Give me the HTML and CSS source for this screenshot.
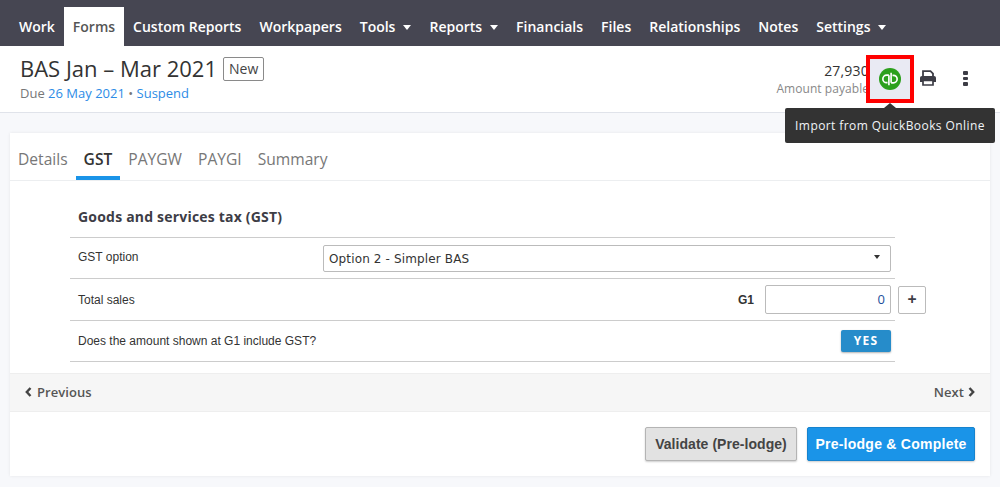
FILE: index.html
```html
<!DOCTYPE html>
<html lang="en">
<head>
<meta charset="utf-8">
<title>BAS Jan – Mar 2021</title>
<link rel="stylesheet" href="styles.css">
</head>
<body>
<nav class="nav">
  <a class="nav-item">Work</a>
  <a class="nav-item active">Forms</a>
  <a class="nav-item">Custom Reports</a>
  <a class="nav-item">Workpapers</a>
  <a class="nav-item">Tools<i class="caret"></i></a>
  <a class="nav-item">Reports<i class="caret"></i></a>
  <a class="nav-item">Financials</a>
  <a class="nav-item">Files</a>
  <a class="nav-item">Relationships</a>
  <a class="nav-item">Notes</a>
  <a class="nav-item">Settings<i class="caret"></i></a>
</nav>
<header class="head">
  <div class="head-left">
    <div class="title-row"><h1 class="title">BAS Jan – Mar 2021</h1><span class="badge">New</span></div>
    <div class="due">Due <a class="link">26 May 2021</a> • <a class="link">Suspend</a></div>
  </div>
  <div class="head-right">
    <div class="amount">
      <div class="amount-value">27,930</div>
      <div class="amount-label">Amount payable</div>
    </div>
    <div class="qb-wrap">
      <div class="qb-box">
        <svg class="qb-icon" width="22" height="22" viewBox="0 0 24 24">
          <circle cx="12" cy="12" r="12" fill="#2ca01c"/>
          <path d="M10.800 7.800v11M13.200 5.200v11" stroke="#fff" stroke-width="1.800" fill="none"/>
          <path d="M10.800 7.800H8.300a4.100 4.100 0 0 0 0 8.200h1M13.200 16.200h2.500a4.100 4.100 0 0 0 0-8.200h-1" stroke="#fff" stroke-width="1.800" fill="none"/>
        </svg>
      </div>
      <div class="tooltip">Import from QuickBooks Online</div>
    </div>
    <svg class="print-icon" width="18" height="16" viewBox="0 0 18 16">
      <path d="M4 6V1.200h7.500L14 3.600V6" fill="#fff" stroke="#3d3d46" stroke-width="1.800"/>
      <path d="M1 8.200C1 6.900 1.800 6 3 6h12c1.200 0 2 .9 2 2.200V12h-3v-1.500H4V12H1z" fill="#3d3d46"/>
      <path d="M4 10.500h10V15H4z" fill="#fff" stroke="#3d3d46" stroke-width="1.700"/>
    </svg>
    <div class="dots"><i></i><i></i><i></i></div>
  </div>
</header>
<main class="card">
  <div class="tabs">
    <a class="tab">Details</a>
    <a class="tab current">GST</a>
    <a class="tab">PAYGW</a>
    <a class="tab">PAYGI</a>
    <a class="tab">Summary</a>
  </div>
  <section class="form">
    <h2 class="form-title">Goods and services tax (GST)</h2>
    <div class="row row-select">
      <span class="label label-select">GST option</span>
      <div class="select">Option 2 - Simpler BAS<i class="select-caret"></i></div>
    </div>
    <div class="row row-sales">
      <span class="label">Total sales</span>
      <span class="code">G1</span>
      <div class="input">0</div>
      <div class="plus">+</div>
    </div>
    <div class="row row-yes">
      <span class="label">Does the amount shown at G1 include GST?</span>
      <div class="yes">YES</div>
    </div>
  </section>
  <div class="pager">
    <a class="pager-link pager-prev"><svg class="chev" width="7" height="10" viewBox="0 0 7 10"><path d="M5.500 1 1.800 5l3.700 4" fill="none" stroke="#444" stroke-width="2.400"/></svg>Previous</a>
    <a class="pager-link">Next<svg class="chev" width="7" height="10" viewBox="0 0 7 10"><path d="M1.500 1l3.700 4-3.700 4" fill="none" stroke="#444" stroke-width="2.400"/></svg></a>
  </div>
  <div class="actions">
    <button class="btn btn-grey">Validate (Pre-lodge)</button>
    <button class="btn btn-blue">Pre-lodge &amp; Complete</button>
  </div>
</main>
</body>
</html>
```
FILE: styles.css
```css
* { box-sizing: border-box; }
html, body { margin: 0; padding: 0; }
body {
  height: 487px;
  overflow: hidden;
  background: #f7f8fb;
  font-family: "Open Sans", sans-serif;
  color: #3d3d46;
}
.nav {
  height: 46px;
  background: #464652;
  display: flex;
  align-items: flex-end;
  padding-left: 10px;
}
.nav-item {
  height: 39px;
  padding: 0 9px;
  display: flex;
  align-items: center;
  color: #fff;
  font-size: 14px;
  font-weight: 600;
  white-space: nowrap;
}
.nav-item.active { background: #fff; color: #555; }
.caret {
  display: inline-block;
  margin-left: 8px;
  margin-top: 1px;
  border-left: 4.500px solid transparent;
  border-right: 4.500px solid transparent;
  border-top: 5px solid #fff;
}
.head {
  height: 67px;
  background: #fff;
  border-bottom: 1px solid #e0e3ea;
  display: flex;
  justify-content: space-between;
  padding: 0 0 0 20px;
}
.head-left { padding-top: 8px; }
.title-row { display: flex; align-items: center; height: 28px; }
.title { margin: 0; font-size: 22px; font-weight: 400; line-height: 28px; color: #333; }
.badge {
  margin-left: 6px;
  height: 24px;
  margin-top: 2px;
  padding: 0 5px;
  border: 1px solid #8a8a8a;
  border-radius: 2px;
  font-size: 14px;
  line-height: 22px;
  color: #444;
}
.due { margin-top: 2px; font-size: 13px; line-height: 18px; color: #777; }
.link { color: #2d8ce6; }
.head-right { display: flex; align-items: flex-start; }
.amount { text-align: right; padding-top: 15px; width: 100px; }
.amount-value { font-size: 14px; line-height: 20px; color: #333; letter-spacing: .2px; }
.amount-label { font-size: 12px; line-height: 16px; color: #888; letter-spacing: .05px; white-space: nowrap; }
.qb-wrap { position: relative; margin-top: 9px; margin-left: -3px; width: 48px; height: 48px; }
.qb-box {
  width: 48px;
  height: 48px;
  border: 4px solid #f00;
  background: #e9eaf3;
  display: flex;
  align-items: center;
  justify-content: center;
}
.tooltip {
  position: absolute;
  top: 53px;
  left: -81px;
  width: 210px;
  height: 35px;
  background: #333;
  border-radius: 2px;
  color: #f0f4f8;
  font-size: 12px;
  line-height: 35px;
  text-align: center;
  white-space: nowrap;
  letter-spacing: .42px;
}
.tooltip::before {
  content: "";
  position: absolute;
  top: -5px;
  left: 99px;
  border-left: 6px solid transparent;
  border-right: 6px solid transparent;
  border-bottom: 5px solid #333;
}
.print-icon { margin: 24px 0 0 5px; }
.dots {
  margin: 25px 32px 0 26px;
  width: 5px;
  display: flex;
  flex-direction: column;
  gap: 2px;
}
.dots i { display: block; width: 5px; height: 3.500px; background: #3d3d46; border-radius: 1px; }
.card {
  margin: 20px 10px 0;
  height: 343px;
  background: #fff;
  box-shadow: 0 0 3px rgba(0,0,0,.08);
  display: flex;
  flex-direction: column;
}
.tabs {
  height: 48px;
  display: flex;
  border-bottom: 1px solid #eceef0;
  flex: none;
}
.tab {
  padding: 14px 8px 0;
  height: 47px;
  font-size: 15.600px;
  line-height: 24px;
  color: #777;
}
.tab.current { color: #333; font-weight: 600; border-bottom: 4px solid #1a94e8; }
.form { height: 192px; padding: 25px 95px 0 60px; flex: none; }
.form-title {
  margin: 0;
  padding: 0 8px;
  height: 31px;
  font-size: 14px;
  line-height: 22px;
  font-weight: 700;
  color: #3d3d46;
  letter-spacing: .2px;
}
.row {
  display: flex;
  align-items: center;
  padding: 0 4px 0 8px;
  border-top: 1px solid #ccc;
  font-family: "Liberation Sans", sans-serif;
  font-size: 12px;
  color: #333;
}
.row-select { height: 41px; justify-content: space-between; }
.row-sales { height: 42px; position: relative; }
.row-yes { height: 42px; border-bottom: 1px solid #ccc; justify-content: space-between; }
.label { flex: none; }
.label-select { margin-top: -3px; }
.select {
  position: relative;
  width: 568px;
  height: 27px;
  border: 1px solid #bbb;
  border-radius: 2px;
  padding-left: 5px;
  font-family: "DejaVu Sans", sans-serif;
  font-size: 12px;
  letter-spacing: .14px;
  line-height: 27px;
  color: #333;
}
.select-caret {
  position: absolute;
  right: 10px;
  top: 9px;
  border-left: 3.500px solid transparent;
  border-right: 3.500px solid transparent;
  border-top: 4px solid #333;
}
.code { margin-left: auto; font-weight: 700; font-size: 12px; margin-right: 11px; }
.input {
  width: 126px;
  height: 29px;
  border: 1px solid #bbb;
  border-radius: 2px;
  text-align: right;
  padding-right: 5px;
  font-family: "Open Sans", sans-serif;
  font-size: 13px;
  line-height: 27px;
  color: #1e4f9c;
}
.plus {
  position: absolute;
  left: 828px;
  top: 7px;
  width: 28px;
  height: 28px;
  border: 1px solid #bbb;
  border-radius: 2px;
  text-align: center;
  font-family: "Open Sans", sans-serif;
  font-weight: 700;
  font-size: 16px;
  line-height: 25px;
  color: #3d3d46;
}
.yes {
  width: 50px;
  height: 22px;
  background: #268cca;
  border-radius: 2px;
  box-shadow: 0 1px 2px rgba(0,0,0,.3);
  color: #fff;
  font-family: "Open Sans", sans-serif;
  font-size: 12px;
  font-weight: 700;
  letter-spacing: 1.200px;
  line-height: 21px;
  text-align: center;
}
.pager {
  height: 39px;
  background: #f6f6f6;
  border-top: 1px solid #eee;
  border-bottom: 1px solid #eee;
  display: flex;
  justify-content: space-between;
  align-items: center;
  padding: 0 15px 2px;
  flex: none;
}
.pager-link {
  display: flex;
  align-items: center;
  gap: 4px;
  font-size: 13px;
  font-weight: 600;
  color: #555;
  letter-spacing: .05px;
}
.pager-prev { gap: 5px; }
.actions {
  display: flex;
  justify-content: flex-end;
  gap: 10px;
  padding: 15px 15px 0 0;
}
.btn {
  height: 34px;
  border-radius: 2px;
  font-family: "Liberation Sans", sans-serif;
  font-size: 14px;
  font-weight: 700;
  padding: 0;
  box-shadow: 0 1px 2px rgba(0,0,0,.2);
}
.btn-grey { width: 152px; background: #e2e2e2; border: 1px solid #b4b4b4; color: #444; letter-spacing: .05px; }
.btn-blue { width: 168px; background: #1a94e8; border: 1px solid #1683ce; color: #fff; letter-spacing: .25px; }
```
